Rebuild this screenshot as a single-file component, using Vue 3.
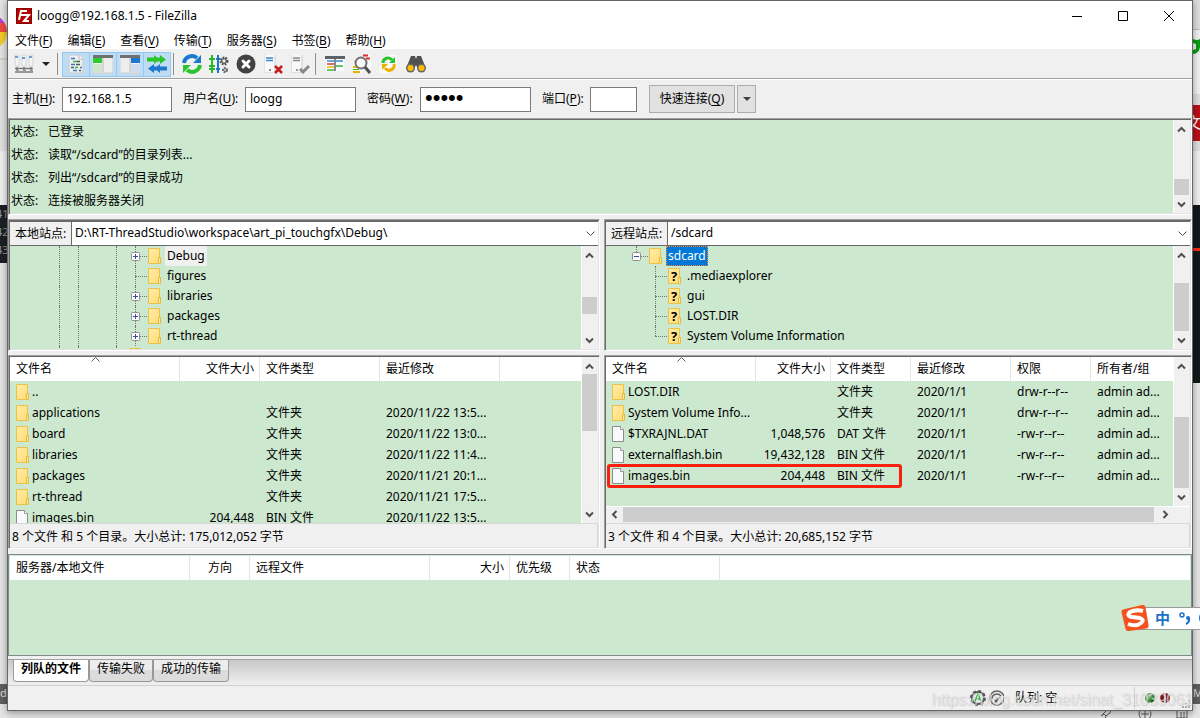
<script setup>
import { ref } from 'vue'

const menus = [
  ['文件', 'F'], ['编辑', 'E'], ['查看', 'V'], ['传输', 'T'],
  ['服务器', 'S'], ['书签', 'B'], ['帮助', 'H'],
]

const host = ref('192.168.1.5')
const user = ref('loogg')
const password = ref('12345')
const port = ref('')
const localPath = ref('D:\\RT-ThreadStudio\\workspace\\art_pi_touchgfx\\Debug\\')
const remotePath = ref('/sdcard')

const log = ['已登录', '读取“/sdcard”的目录列表...', '列出“/sdcard”的目录成功', '连接被服务器关闭']

const localTree = [
  { name: 'Debug', open: true, active: true },
  { name: 'figures', open: false },
  { name: 'libraries', open: true },
  { name: 'packages', open: true },
  { name: 'rt-thread', open: true },
]
const remoteTree = ['.mediaexplorer', 'gui', 'LOST.DIR', 'System Volume Information']

const localFiles = [
  { name: '..', dir: true, size: '', type: '', date: '' },
  { name: 'applications', dir: true, size: '', type: '文件夹', date: '2020/11/22 13:5...' },
  { name: 'board', dir: true, size: '', type: '文件夹', date: '2020/11/22 13:0...' },
  { name: 'libraries', dir: true, size: '', type: '文件夹', date: '2020/11/22 11:4...' },
  { name: 'packages', dir: true, size: '', type: '文件夹', date: '2020/11/21 20:1...' },
  { name: 'rt-thread', dir: true, size: '', type: '文件夹', date: '2020/11/21 17:5...' },
  { name: 'images.bin', dir: false, size: '204,448', type: 'BIN 文件', date: '2020/11/22 13:5...' },
]
const remoteFiles = [
  { name: 'LOST.DIR', dir: true, size: '', type: '文件夹', perm: 'drw-r--r--' },
  { name: 'System Volume Info...', dir: true, size: '', type: '文件夹', perm: 'drw-r--r--' },
  { name: '$TXRAJNL.DAT', dir: false, size: '1,048,576', type: 'DAT 文件', perm: '-rw-r--r--' },
  { name: 'externalflash.bin', dir: false, size: '19,432,128', type: 'BIN 文件', perm: '-rw-r--r--' },
  { name: 'images.bin', dir: false, size: '204,448', type: 'BIN 文件', perm: '-rw-r--r--', marked: true },
]

const tabs = ['列队的文件', '传输失败', '成功的传输']
const activeTab = ref(0)

/* Track share before, inside and after each scrollbar thumb. */
const bars = {
  log: [43, 17, 1],
  localTree: [35, 17, 19],
  remoteTree: [21, 49, 1],
  localList: [0, 57, 76],
  remoteList: [43, 72, 1],
}
</script>

<template>
  <div class="desktop">
    <svg class="sprite" width="0" height="0" aria-hidden="true">
      <defs>
        <linearGradient id="fold" x1="0" y1="0" x2="1" y2="1">
          <stop offset="0" stop-color="#ffeca8" /><stop offset="1" stop-color="#ffdc73" />
        </linearGradient>
      </defs>
      <symbol id="folder" viewBox="0 0 16 16">
        <path d="M.5.5h11v9h1v6H.5z" fill="url(#fold)" stroke="#ebc14c" />
        <path d="M10.500 15v-5.500h2V15" fill="#ffe79b" stroke="#e6b83c" />
      </symbol>
      <symbol id="file" viewBox="0 0 16 16">
        <path d="M.5.5h8l3 3v12H.5z" fill="#f8f9fb" stroke="#8d8d8d" />
        <path d="M8.500.5v3h3" fill="#fff" stroke="#9a9a9a" />
      </symbol>
      <symbol id="up" viewBox="0 0 9 9"><path d="M1 6.500 4.500 3 8 6.500" fill="none" stroke="#505050" stroke-width="2" /></symbol>
      <symbol id="down" viewBox="0 0 9 9"><path d="M1 2.500 4.500 6 8 2.500" fill="none" stroke="#505050" stroke-width="2" /></symbol>
      <symbol id="left" viewBox="0 0 9 9"><path d="M6.500 1 3 4.500 6.500 8" fill="none" stroke="#505050" stroke-width="2" /></symbol>
      <symbol id="right" viewBox="0 0 9 9"><path d="M2.500 1 6 4.500 2.500 8" fill="none" stroke="#505050" stroke-width="2" /></symbol>
      <symbol id="thin" viewBox="0 0 9 9"><path d="M.5 2.500 4.500 6.500 8.500 2.500" fill="none" stroke="#505050" /></symbol>
      <symbol id="sort" viewBox="0 0 9 5"><path d="M.5 4.500 4.500.5 8.500 4.500" fill="none" stroke="#606060" /></symbol>
      <symbol id="box" viewBox="0 0 9 9">
        <rect x=".5" y=".5" width="8" height="8" rx="1" fill="#fafafa" stroke="#919191" />
        <path d="M2 4.500h5" stroke="#3a4f9b" />
      </symbol>
    </svg>

    <div class="strip strip-left" aria-hidden="true">
      <i class="ball"></i>
      <span class="code">41<br>42<br>43</span>
      <i class="chip">d</i>
    </div>
    <div class="strip strip-right" aria-hidden="true">
      <svg class="leaf" width="7" height="20" viewBox="0 0 7 20"><path d="M0 1q4 2 7 0v8q-1 7-7 7v-4l3-1V6L0 5z" fill="#0c9a13" /></svg>
      <span class="red">文</span>
      <i class="rule"></i>
      <i class="chip">M</i>
    </div>
    <svg class="under" width="90" height="10" viewBox="0 0 90 10" fill="none" stroke="#555" aria-hidden="true">
      <path d="m2 7 5-5 4-2-1 5-4 3-2-2M4 6l-3 2m5 0-1 3" />
      <circle cx="45" cy="6" r="6" /><path d="M45 2v8m-4-4h8" />
      <path d="M76 1.500h12M79 1V0h6v1m-8 1v8h10V2m-6 2v6m3-6v6" />
    </svg>

    <main class="window">
      <header class="title">
        <svg width="16" height="16" viewBox="0 0 16 16">
          <rect width="16" height="16" fill="#b30000" /><rect x=".5" y=".5" width="15" height="15" fill="none" stroke="#8b0000" />
          <path d="M3 12 5 3h6M4 7h4" fill="none" stroke="#fff" stroke-width="2" />
          <path d="M8 7h5l-5 6h5" fill="none" stroke="#fff" stroke-width="2" />
        </svg>
        <h1>loogg@192.168.1.5 - FileZilla</h1>
        <div class="caption">
          <button aria-label="最小化"><svg width="10" height="10" viewBox="0 0 10 10"><path d="M0 5.500h10" stroke="#000" /></svg></button>
          <button aria-label="最大化"><svg width="10" height="10" viewBox="0 0 10 10"><path d="M.5.5h9v9h-9z" fill="none" stroke="#000" /></svg></button>
          <button aria-label="关闭"><svg width="10" height="10" viewBox="0 0 10 10"><path d="m0 0 10 10M10 0 0 10" stroke="#000" /></svg></button>
        </div>
      </header>

      <nav class="menu">
        <button v-for="[label, key] in menus" :key="key">{{ label }}(<u>{{ key }}</u>)</button>
      </nav>

      <div class="toolbar">
        <button class="tool" aria-label="站点管理器">
          <svg width="20" height="20" viewBox="0 0 20 20">
            <path d="M1 1h4v11H1zM8 1h4v11H8zM15 1h4v11h-4z" fill="#f4f6f8" stroke="#d0d4d8" />
            <path d="M1 3h3M8 4h3m4-1h3" stroke="#3f83c8" stroke-width="1.500" />
            <path d="M3 13v4m7-4v4m7-4v4M1 14.500h18M1 18h18" stroke="#777" stroke-width="1.500" />
            <path d="M2 16h3v3H2zm7 0h3v3H9zm7 0h3v3h-3z" fill="#999" />
          </svg>
        </button>
        <button class="more" aria-label="站点列表"><svg width="8" height="5" viewBox="0 0 8 5"><path d="M0 0h8L4 4z" fill="#222" /></svg></button>
        <i class="sep"></i>
        <div class="toggles">
          <button class="tool on" aria-label="消息日志" aria-pressed="true">
            <svg width="20" height="20" viewBox="0 0 20 20">
              <path d="M3 1h10l4 4v14H3z" fill="#e9eff3" stroke="#c6ced4" /><path d="M13 1v4h4" fill="#fff" stroke="#bbb" />
              <path d="M5 4.500h4m-4 6h4m5 3h2m-9 3h4" stroke="#4472b8" stroke-width="1.500" />
              <path d="M7 7.500h4m-2 6h3" stroke="#35b735" stroke-width="1.500" />
              <path d="M11 7.500h3m-4 3h4m-9 3h3m5 3h2" stroke="#555" stroke-width="1.500" />
            </svg>
          </button>
          <button class="tool on" aria-label="本地目录树" aria-pressed="true">
            <svg width="20" height="20" viewBox="0 0 20 20">
              <path d="M0 2h20v17H0z" fill="#eeeeec" stroke="#cfcfcf" /><path d="M0 1h20v3H0z" fill="#707070" />
              <path d="M0 4h9v5H0z" fill="#2dcb2d" /><path d="M0 10h9v8H0z" fill="#cfe6cc" /><path d="M10 4v14" stroke="#bbb" />
            </svg>
          </button>
          <button class="tool on" aria-label="远程目录树" aria-pressed="true">
            <svg width="20" height="20" viewBox="0 0 20 20">
              <path d="M0 2h20v17H0z" fill="#eeeeec" stroke="#cfcfcf" /><path d="M0 1h20v3H0z" fill="#707070" />
              <path d="M11 4h9v5h-9z" fill="#1c78d2" /><path d="M11 10h9v8h-9z" fill="#cedded" /><path d="M10 4v14" stroke="#bbb" />
            </svg>
          </button>
          <button class="tool on" aria-label="传输队列" aria-pressed="true">
            <svg width="20" height="20" viewBox="0 0 20 20">
              <path d="M0 3.500h7V1l3 2.500h3V1l6 4.500-6 4.500V7.500h-3L7 10V7.500H0z" fill="#2bc52b" />
              <path d="M20 12.500h-7V10l-3 2.500H7V10l-6 4.500L7 19v-2.500h3l3 2.500v-2.500h7z" fill="#1b78d1" />
            </svg>
          </button>
        </div>
        <i class="sep"></i>
        <button class="tool" aria-label="刷新">
          <svg width="20" height="20" viewBox="0 0 20 20">
            <path d="M2 9a8 8 0 0 1 13-5" fill="none" stroke="#1b78d1" stroke-width="4" /><path d="M19 1v8h-8z" fill="#1b78d1" />
            <path d="M18 11a8 8 0 0 1-13 5" fill="none" stroke="#2bc52b" stroke-width="4" /><path d="M1 19v-8h8z" fill="#2bc52b" />
          </svg>
        </button>
        <button class="tool" aria-label="处理队列">
          <svg width="20" height="20" viewBox="0 0 20 20">
            <path d="M3 1v18M0 5h6M0 12h6M0 15h6" fill="none" stroke="#2bb52b" stroke-width="2" />
            <path d="M9 1v18M7 15h4M7 5h4" fill="none" stroke="#1b78d1" stroke-width="2" />
            <circle cx="15" cy="7" r="3" fill="none" stroke="#555" stroke-width="3" stroke-dasharray="1.500 1" /><circle cx="15" cy="7" r="2.500" fill="none" stroke="#555" />
            <circle cx="16" cy="16" r="2" fill="none" stroke="#666" stroke-width="2" stroke-dasharray="1.500 1" /><circle cx="16" cy="16" r="1.500" fill="none" stroke="#666" />
          </svg>
        </button>
        <button class="tool" aria-label="取消">
          <svg width="20" height="20" viewBox="0 0 20 20"><circle cx="10" cy="10" r="9.500" fill="#424242" /><path d="m7 7 6 6m0-6-6 6" stroke="#fff" stroke-width="3" stroke-linecap="round" /></svg>
        </button>
        <button class="tool" aria-label="断开">
          <svg width="20" height="20" viewBox="0 0 20 20">
            <path d="M1 1h12v18H1z" fill="#e3e3e3" /><path d="M2 1h9v17H2z" fill="#fafafa" /><path d="M3 4h7M3 6.500h7" stroke="#3d85cc" stroke-width="1.500" /><path d="M6 16h2" stroke="#888" stroke-width="2" />
            <path d="m12 12 7 7m0-7-7 7" stroke="#c51c1c" stroke-width="2.500" />
          </svg>
        </button>
        <button class="tool" aria-label="重新连接">
          <svg width="20" height="20" viewBox="0 0 20 20">
            <path d="M1 1h12v18H1z" fill="#dedede" /><path d="M2 1h9v17H2z" fill="#f8f8f8" /><path d="M3 4h7M3 6.500h7" stroke="#888" stroke-width="1.500" /><path d="M6 16h2" stroke="#999" stroke-width="2" />
            <path d="m10 15 3 3 6-6" fill="none" stroke="#888" stroke-width="3" />
          </svg>
        </button>
        <i class="sep wide"></i>
        <button class="tool" aria-label="目录比较">
          <svg width="20" height="20" viewBox="0 0 20 20">
            <path d="M1 3h18v14H1z" fill="#fff" /><path d="M0 2h20v3H0z" fill="#5b6368" /><path d="M10 5v12" stroke="#5b6368" stroke-width="1.500" />
            <path d="M2 7h7m2 0h7" stroke="#3d85cc" stroke-width="1.500" /><path d="M2 10h7" stroke="#d83838" stroke-width="1.500" /><path d="M2 13h7" stroke="#f0b400" stroke-width="1.500" /><path d="M2 16h7m2-4h7" stroke="#38b038" stroke-width="1.500" />
          </svg>
        </button>
        <button class="tool" aria-label="过滤器">
          <svg width="20" height="20" viewBox="0 0 20 20">
            <path d="M11 1h8v13h-8zM1 9h10v10H1z" fill="#fafafa" /><path d="M11 1.500h5m-2 3h4" stroke="#d52d2d" stroke-width="2" /><path d="M1 13h4m-4 5h7" stroke="#edb000" stroke-width="2" /><path d="M1 15.500h6" stroke="#35b735" />
            <circle cx="9" cy="9" r="5.500" fill="#f7f7f7" fill-opacity=".8" stroke="#707070" stroke-width="2" /><path d="m13 13 5 6" stroke="#505050" stroke-width="3" />
          </svg>
        </button>
        <button class="tool" aria-label="同步浏览">
          <svg width="20" height="20" viewBox="0 0 20 20">
            <path d="M9 1h9v13H9zM1 12h9v7H1z" fill="#fafafa" /><path d="M4 9a5 5 0 0 1 9-3" fill="none" stroke="#2bc52b" stroke-width="3" /><path d="M16 3v6h-6z" fill="#2bc52b" />
            <path d="M15 10a5 5 0 0 1-9 4" fill="none" stroke="#edb000" stroke-width="3" /><path d="M3 16v-6h6z" fill="#edb000" />
          </svg>
        </button>
        <button class="tool" aria-label="查找">
          <svg width="20" height="20" viewBox="0 0 20 20">
            <path d="M5 2h4l1 3 1-3h4l4 10-7 3-2-4-2 4-7-3z" fill="#505050" />
            <circle cx="4.500" cy="14" r="4.500" fill="#666" /><circle cx="15.500" cy="14" r="4.500" fill="#666" /><circle cx="4.500" cy="14" r="3" fill="#ffb900" /><circle cx="15.500" cy="14" r="3" fill="#ffb900" />
          </svg>
        </button>
      </div>

      <form class="quick" @submit.prevent>
        <label for="host">主机(<u>H</u>):</label><input id="host" v-model="host">
        <label for="user">用户名(<u>U</u>):</label><input id="user" v-model="user">
        <label for="pass">密码(<u>W</u>):</label><input id="pass" v-model="password" type="password" autocomplete="off">
        <label for="port">端口(<u>P</u>):</label><input id="port" v-model="port" class="port">
        <button class="connect">快速连接(<u>Q</u>)</button>
        <button class="history" type="button" aria-label="历史"><svg width="8" height="5" viewBox="0 0 8 5"><path d="M0 0h8L4 4z" fill="#404040" /></svg></button>
      </form>

      <section class="sunken log">
        <ul>
          <li v-for="line in log" :key="line"><span>状态:</span>{{ line }}</li>
        </ul>
        <div class="vbar">
          <svg width="9" height="9"><use href="#up" /></svg>
          <div class="track"><i :style="{ flexGrow: bars.log[0] }"></i><b :style="{ flexGrow: bars.log[1] }"></b><i :style="{ flexGrow: bars.log[2] }"></i></div>
          <svg width="9" height="9"><use href="#down" /></svg>
        </div>
      </section>

      <div class="sites">
        <div class="site">
          <section class="sunken browse">
            <div class="address">
              <label for="local">本地站点:</label>
              <input id="local" v-model="localPath">
              <button aria-label="本地路径"><svg width="9" height="9"><use href="#thin" /></svg></button>
            </div>
            <div class="body">
              <ul class="tree local">
                <li v-for="n in localTree" :key="n.name">
                  <i class="guide"></i><i class="guide second"></i><i class="guide third"></i>
                  <span class="node">
                    <svg v-if="n.open" class="expander" width="9" height="9" viewBox="0 0 9 9"><use href="#box" /><path d="M4.500 2v5" stroke="#3a4f9b" /></svg>
                  </span>
                  <svg width="16" height="16"><use href="#folder" /></svg>
                  <span class="label" :class="{ active: n.active }">{{ n.name }}</span>
                </li>
                <li class="next"><i class="guide"></i><i class="guide second"></i><i class="guide third"></i><svg width="16" height="16"><use href="#folder" /></svg></li>
              </ul>
              <div class="vbar">
                <svg width="9" height="9"><use href="#up" /></svg>
                <div class="track"><i :style="{ flexGrow: bars.localTree[0] }"></i><b :style="{ flexGrow: bars.localTree[1] }"></b><i :style="{ flexGrow: bars.localTree[2] }"></i></div>
                <svg width="9" height="9"><use href="#down" /></svg>
              </div>
            </div>
          </section>

          <section class="sunken list">
            <div class="body">
              <div class="sheet">
                <table>
                  <colgroup><col class="w170"><col class="w80"><col class="w120"><col class="w120"><col></colgroup>
                  <thead><tr><th>文件名<svg class="sort" width="9" height="5"><use href="#sort" /></svg></th><th class="num">文件大小</th><th>文件类型</th><th>最近修改</th><th></th></tr></thead>
                  <tbody>
                    <tr v-for="f in localFiles" :key="f.name">
                      <td><div class="name"><svg width="16" height="16"><use :href="f.dir ? '#folder' : '#file'" /></svg>{{ f.name }}</div></td>
                      <td class="num">{{ f.size }}</td><td>{{ f.type }}</td><td>{{ f.date }}</td><td></td>
                    </tr>
                  </tbody>
                </table>
              </div>
              <div class="vbar">
                <svg width="9" height="9"><use href="#up" /></svg>
                <div class="track"><i :style="{ flexGrow: bars.localList[0] }"></i><b :style="{ flexGrow: bars.localList[1] }"></b><i :style="{ flexGrow: bars.localList[2] }"></i></div>
                <svg width="9" height="9"><use href="#down" /></svg>
              </div>
            </div>
            <p class="summary">8 个文件 和 5 个目录。大小总计: 175,012,052 字节</p>
          </section>
        </div>

        <div class="site">
          <section class="sunken browse">
            <div class="address">
              <label for="remote">远程站点:</label>
              <input id="remote" v-model="remotePath">
              <button aria-label="远程路径"><svg width="9" height="9"><use href="#thin" /></svg></button>
            </div>
            <div class="body">
              <ul class="tree remote">
                <li class="root">
                  <span class="node"><svg class="expander" width="9" height="9"><use href="#box" /></svg></span>
                  <svg width="16" height="16"><use href="#folder" /></svg>
                  <span class="label selected">sdcard</span>
                </li>
                <li v-for="n in remoteTree" :key="n" class="child">
                  <span class="node"></span>
                  <span class="unknown"><svg width="16" height="16"><use href="#folder" /></svg><b>?</b></span>
                  <span class="label">{{ n }}</span>
                </li>
              </ul>
              <div class="vbar">
                <svg width="9" height="9"><use href="#up" /></svg>
                <div class="track"><i :style="{ flexGrow: bars.remoteTree[0] }"></i><b :style="{ flexGrow: bars.remoteTree[1] }"></b><i :style="{ flexGrow: bars.remoteTree[2] }"></i></div>
                <svg width="9" height="9"><use href="#down" /></svg>
              </div>
            </div>
          </section>

          <section class="sunken list">
            <div class="body">
              <div class="sheet">
                <table>
                  <colgroup><col class="w150"><col class="w75"><col class="w80"><col class="w100"><col class="w80"><col></colgroup>
                  <thead><tr><th>文件名<svg class="sort" width="9" height="5"><use href="#sort" /></svg></th><th class="num">文件大小</th><th>文件类型</th><th>最近修改</th><th>权限</th><th>所有者/组</th></tr></thead>
                  <tbody>
                    <tr v-for="f in remoteFiles" :key="f.name">
                      <td><div class="name"><svg width="16" height="16"><use :href="f.dir ? '#folder' : '#file'" /></svg>{{ f.name }}</div><i v-if="f.marked" class="mark"></i></td>
                      <td class="num">{{ f.size }}</td><td>{{ f.type }}</td><td>2020/1/1</td><td>{{ f.perm }}</td><td>admin ad...</td>
                    </tr>
                  </tbody>
                </table>
              </div>
              <div class="vbar">
                <svg width="9" height="9"><use href="#up" /></svg>
                <div class="track"><i :style="{ flexGrow: bars.remoteList[0] }"></i><b :style="{ flexGrow: bars.remoteList[1] }"></b><i :style="{ flexGrow: bars.remoteList[2] }"></i></div>
                <svg width="9" height="9"><use href="#down" /></svg>
              </div>
            </div>
            <div class="hbar">
              <svg width="9" height="9"><use href="#left" /></svg>
              <b></b>
              <svg width="9" height="9"><use href="#right" /></svg>
            </div>
            <p class="summary">3 个文件 和 4 个目录。大小总计: 20,685,152 字节</p>
          </section>
        </div>
      </div>

      <section class="queue">
        <table>
          <colgroup><col class="w180"><col class="w60"><col class="w180"><col class="w80"><col class="w60"><col class="w150"><col></colgroup>
          <thead><tr><th>服务器/本地文件</th><th class="mid">方向</th><th>远程文件</th><th class="num">大小</th><th>优先级</th><th>状态</th><th></th></tr></thead>
        </table>
      </section>

      <div class="tabs" role="tablist">
        <button v-for="(t, i) in tabs" :key="t" role="tab" :aria-selected="i === activeTab" :class="{ current: i === activeTab }" @click="activeTab = i">{{ t }}</button>
      </div>

      <footer class="status">
        <svg width="34" height="16" viewBox="0 0 34 16">
          <circle cx="8" cy="8" r="6" fill="#f8f8f8" stroke="#555" stroke-width="2" /><circle cx="8" cy="8" r="7" fill="none" stroke="#555" stroke-width="2" stroke-dasharray="3 2.500" />
          <path d="m5 11 3-7 3 7M6 9h4" fill="none" stroke="#2bb52b" stroke-width="1.500" />
          <circle cx="27" cy="8" r="7" fill="#eee" stroke="#666" stroke-width="1.500" /><path d="M22 9a5 5 0 0 1 9-3m-5 5 4-4" fill="none" stroke="#666" stroke-width="1.500" /><circle cx="26" cy="11" r="1.500" fill="#555" />
        </svg>
        <span class="state">队列: 空</span>
        <i class="divider"></i>
        <i class="lamp green"></i><i class="lamp crimson"></i>
        <svg class="grip" width="8" height="8" viewBox="0 0 8 8" fill="#aaa"><path d="M6 0h2v2H6zM3 3h2v2H3zM6 3h2v2H6zM0 6h2v2H0zM3 6h2v2H3zM6 6h2v2H6z" /></svg>
      </footer>
    </main>

    <p class="watermark">https://blog.csdn.net/sinat_31039061</p>

    <div class="ime">
      <svg width="28" height="28" viewBox="0 0 28 28">
        <path d="M4 5 21 1q3-.5 3.500 2l3 18q.5 3-2 3.500L8 27q-3 .5-3.500-2L.5 8Q0 5.500 4 5z" fill="#f4511e" />
        <path d="M22 7q-7-2-13 1-4 4 2 5l8 1q5 2 1 5-5 4-13 1" fill="none" stroke="#fff" stroke-width="4" />
      </svg>
      <span class="zh">中</span>
      <svg width="28" height="16" viewBox="0 0 28 16" fill="none" stroke="#1b70c8">
        <circle cx="4" cy="5" r="2" stroke-width="1.500" /><circle cx="10" cy="8" r="2" fill="#1b70c8" stroke="none" /><path d="M11 8q1 4-3 6" stroke-width="2" /><circle cx="28" cy="8" r="6" stroke-width="2" />
      </svg>
    </div>
  </div>
</template>

<style>
html, body { margin: 0; background: #e6e6e6; }
</style>

<style scoped>
* { box-sizing: border-box; }
.desktop {
  position: relative;
  display: flex;
  min-height: 100vh;
  padding: 0 7px 7px;
  overflow: hidden;
  background: linear-gradient(#dedede, #dedede) 0 100% / 100% 8px no-repeat, #e6e6e6;
  font-family: "Noto Sans", "Noto Sans CJK SC", sans-serif;
  font-size: 12px;
  line-height: 18px;
  color: #000;
}
.sprite { position: absolute; }
svg { display: block; flex: none; }
ul { margin: 0; padding: 0; list-style: none; }
button, input { margin: 0; font: inherit; color: inherit; border-radius: 0; }
button { padding: 0; border: 0; background: none; }
u { text-underline-offset: 2px; }

.window {
  position: relative;
  display: flex;
  flex-direction: column;
  flex: 1;
  min-width: 0;
  height: calc(100vh - 7px);
  border: 1px solid #666;
  background: #f0f0f0;
  box-shadow: 0 1px 7px #0006;
}

.title { display: flex; align-items: center; height: 30px; padding-left: 8px; background: #fff; }
.title h1 { flex: 1; margin: 0 0 0 5px; font-size: 12px; font-weight: 400; }
.caption { display: flex; align-items: center; gap: 35px; padding-right: 17px; }
.caption button { width: 11px; height: 10px; }

.menu { display: flex; gap: 1px; height: 18px; padding-top: 1px; background: #fff; }
.menu button { padding: 0 7px; white-space: nowrap; }

.toolbar { display: flex; align-items: center; height: 31px; padding-left: 2px; border-bottom: 1px solid #fff; box-shadow: inset 0 -1px #a0a0a0; }
.tool { display: flex; align-items: center; justify-content: center; width: 27px; height: 25px; }
.more { display: flex; align-items: center; justify-content: center; width: 18px; height: 25px; }
.toggles { display: flex; border-right: 1px solid #90c8f6; }
.tool.on { border: 1px solid #90c8f6; border-right: 0; background: #c0dcf3; }
.sep { width: 1px; height: 22px; margin: 0 4px 0 2px; background: #8d8d8d; }
.sep.wide { margin: 0 5px 0 2px; }

.quick { display: flex; align-items: center; height: 38px; padding: 0 4px; }
.quick label { flex: none; width: 50px; white-space: nowrap; }
.quick label[for="user"] { width: 62px; }
.quick label[for="pass"] { width: 53px; }
.quick label[for="port"] { width: 48px; }
.quick input { width: 111px; height: 25px; margin-right: 11px; padding: 0 4px 2px; border: 1px solid #7a7a7a; background: #fff; outline: 0; }
.quick #host { width: 110px; }
.quick #pass { font-family: "Liberation Sans", sans-serif; font-size: 22px; }
.quick input.port { width: 47px; margin-right: 12px; }
.quick button { display: flex; align-items: center; justify-content: center; height: 28px; border: 1px solid #adadad; background: #e1e1e1; }
.connect { width: 86px; margin-right: 2px; white-space: nowrap; }
.history { width: 19px; }

.sunken {
  padding: 1px;
  border: 1px solid;
  border-color: #a0a0a0 #fff #fff #a0a0a0;
  box-shadow: inset 1px 1px #696969, inset -1px -1px #e3e3e3;
}
.log { display: flex; flex: none; margin-bottom: 4px; }
.log ul { flex: 1; padding: 0 1px 1px; background: #cce8cf; }
.log li { height: 23px; line-height: 23px; }
.log li span { display: inline-block; width: 37px; }

.vbar { display: flex; flex-direction: column; align-items: center; flex: none; width: 17px; padding: 5px 2px 4px 0; border-left: 1px solid #fff; background: #f0f0f0; }
.track { display: flex; flex-direction: column; align-self: stretch; flex: 1; margin: 3px -1px 4px 0; }
.track i, .track b { flex-basis: 0; }
.track b, .hbar b { background: #cdcdcd; }
.hbar { display: flex; align-items: center; flex: none; height: 17px; padding: 0 20px 1px 4px; border-top: 1px solid #fff; }
.hbar b { flex: 1; align-self: stretch; margin: 0 7px 0 4px; }

.sites { display: grid; grid-template-columns: 592fr 588fr; gap: 4px; flex: 1; min-height: 0; margin-bottom: 5px; }
.site { display: flex; flex-direction: column; gap: 4px; min-width: 0; min-height: 0; }
.browse { flex: none; }
.address { display: flex; height: 25px; border-top: 1px solid #696969; border-bottom: 1px solid #696969; background: #fff; }
.address label { display: flex; align-items: center; width: 62px; padding-left: 5px; border-right: 1px solid #696969; background: #f0f0f0; white-space: nowrap; }
.address input { flex: 1; min-width: 0; padding: 0 3px 2px; border: 0; background: none; outline: 0; }
.address button { display: flex; align-items: center; justify-content: center; width: 15px; }
.body { display: flex; flex: 1; min-height: 0; }

.tree { position: relative; flex: 1; height: 103px; overflow: hidden; background: #cce8cf; }
.tree li { position: relative; display: flex; align-items: center; height: 20px; }
.tree.local li { padding-left: 125px; }
.tree.local li.next { height: 20px; padding-left: 119px; }
.guide { position: absolute; left: 49px; top: 0; bottom: 0; border-left: 1px dotted #777; }
.guide.second { left: 68px; }
.guide.third { left: 106px; }
.node { position: relative; align-self: stretch; width: 13px; }
.node::before { content: ""; position: absolute; left: 0; top: 0; bottom: 0; border-left: 1px dotted #777; }
.node::after { content: ""; position: absolute; left: 0; right: 1px; top: 10px; border-top: 1px dotted #777; }
.expander { position: absolute; left: -4px; top: 6px; z-index: 1; }
.label { height: 20px; padding: 0 2px; margin-left: 1px; line-height: 20px; white-space: nowrap; }
.label.active { background: #f0f0f0; }
.tree.remote .root { padding-left: 30px; }
.tree.remote .root .node::before { bottom: 10px; }
.tree.remote .child { padding-left: 49px; }
.tree.remote .child:last-child .node::before { bottom: 10px; }
.label.selected { padding: 0 1px; border: 1px dotted #ff8728; background: #0078d7; color: #fff; line-height: 18px; }
.unknown { position: relative; width: 16px; }
.unknown b { position: absolute; left: 3px; top: -1px; font-size: 13px; }

.list { display: flex; flex-direction: column; flex: 1; min-height: 0; }
.sheet { flex: 1; min-width: 0; overflow: hidden; background: #cce8cf; }
table { width: 100%; table-layout: fixed; border-collapse: separate; border-spacing: 0; }
th { position: relative; height: 24px; padding: 0 5px 0 6px; border-right: 1px solid #e5e5e5; background: #fff; font-weight: 400; text-align: left; line-height: 18px; white-space: nowrap; }
th:last-child { border-right: 0; }
td { position: relative; height: 21px; padding: 0 6px; line-height: 18px; white-space: nowrap; }
.num { text-align: right; }
.mid { text-align: center; }
.name { display: flex; align-items: center; height: 21px; }
.sort { position: absolute; left: calc(50% - 4px); top: 0; }
.mark { position: absolute; z-index: 2; left: 1px; top: -1px; width: 295px; height: 24px; border: 3px solid #fa2010; border-radius: 3px; }
.w170 { width: 170px; }
.w180 { width: 180px; }
.w150 { width: 150px; }
.w120 { width: 120px; }
.w100 { width: 100px; }
.w80 { width: 80px; }
.w75 { width: 75px; }
.w60 { width: 60px; }
.summary { flex: none; height: 24px; margin: 0; padding: 4px 2px 1px; border-top: 1px solid #d7d7d7; border-right: 1px solid #d7d7d7; background: #f0f0f0; line-height: 18px; white-space: nowrap; }

.queue { flex: none; height: 102px; padding: 1px; border: 1px solid #828790; background: #cce8cf; }
.tabs { display: flex; align-items: flex-start; flex: none; height: 27px; margin-top: 3px; padding-left: 5px; border-top: 1px solid #a0a0a0; border-bottom: 1px solid #d0d0d0; background: linear-gradient(#c8c8c8, #f0f0f0); }
.tabs button { height: 22px; padding: 0 7px 3px; border: 1px solid #999; border-top: 0; border-radius: 0 0 4px 4px; background: linear-gradient(#ededed 45%, #dcdcdc 50%); white-space: nowrap; }
.tabs button.current { background: #fff; font-weight: 700; }

.status { position: relative; display: flex; align-items: center; flex: none; height: 24px; padding-right: 22px; justify-content: flex-end; }
.state { width: 130px; padding-left: 11px; }
.divider { width: 1px; height: 22px; margin-right: 10px; background: #d0d0d0; }
.lamp { width: 10px; height: 10px; margin-right: 5px; border-radius: 50%; }
.lamp.crimson { margin-right: 0; }
.green { background: radial-gradient(circle at 35% 30%, #a8d8a8, #1b6d1b 60%); }
.crimson { background: linear-gradient(90deg, #7c1010 40%, #caa 40% 60%, #7c1010 60%); }
.grip { position: absolute; right: 2px; bottom: 2px; }

.watermark { position: absolute; z-index: 3; right: 7px; bottom: 9px; margin: 0; font-family: "Liberation Sans", sans-serif; font-size: 16px; line-height: 18px; color: #ffffff90; text-shadow: 0 0 1px #9996, 1px 1px 1px #9995; }
.ime { position: absolute; z-index: 4; right: 0; top: 604px; display: flex; align-items: center; width: 79px; overflow: hidden; background: linear-gradient(#9a9a9a 1px, #fff 1px 22px, #9a9a9a 22px) 14px 3px / 100% 23px no-repeat; }
.zh { margin: 0 8px 0 6px; color: #1b70c8; font-size: 15px; font-weight: 700; line-height: 24px; }

.strip { position: absolute; top: 0; bottom: 0; width: 7px; overflow: hidden; }
.strip-left { left: 0; background: linear-gradient(#e2e2e2 58px, #ccc 58px 60px, #e0e0e0 60px 151px, #eee 151px 205px, #1c2024 205px 263px, #e3e3e3 263px); }
.strip-right { right: 0; background: linear-gradient(#ddd 29px, #bbb 29px 30px, #f0f0f0 30px 94px, #ddd 94px 151px, #eee 151px 205px, #12171a 205px 383px, #e6e6e6 383px); }
.ball { position: absolute; left: -29px; top: 14px; width: 36px; height: 36px; border-radius: 50%; background: linear-gradient(#b53bd8 25%, #f04a40 25% 50%, #f3c72c 50%); }
.code { position: absolute; left: -4px; top: 205px; color: #8d9296; font-size: 11px; }
.chip { position: absolute; left: 0; right: 0; top: 684px; height: 20px; background: #606060; color: #ddd; font-size: 11px; font-style: normal; }
.leaf { position: absolute; left: 0; top: 38px; }
.red { position: absolute; left: -7px; top: 105px; height: 36px; background: #b80f18; color: #fff; font-size: 15px; line-height: 34px; }
.rule { position: absolute; left: 0; right: 0; top: 248px; height: 3px; background: #f52a18; }
.under { position: absolute; left: 1100px; bottom: 0; }
</style>
